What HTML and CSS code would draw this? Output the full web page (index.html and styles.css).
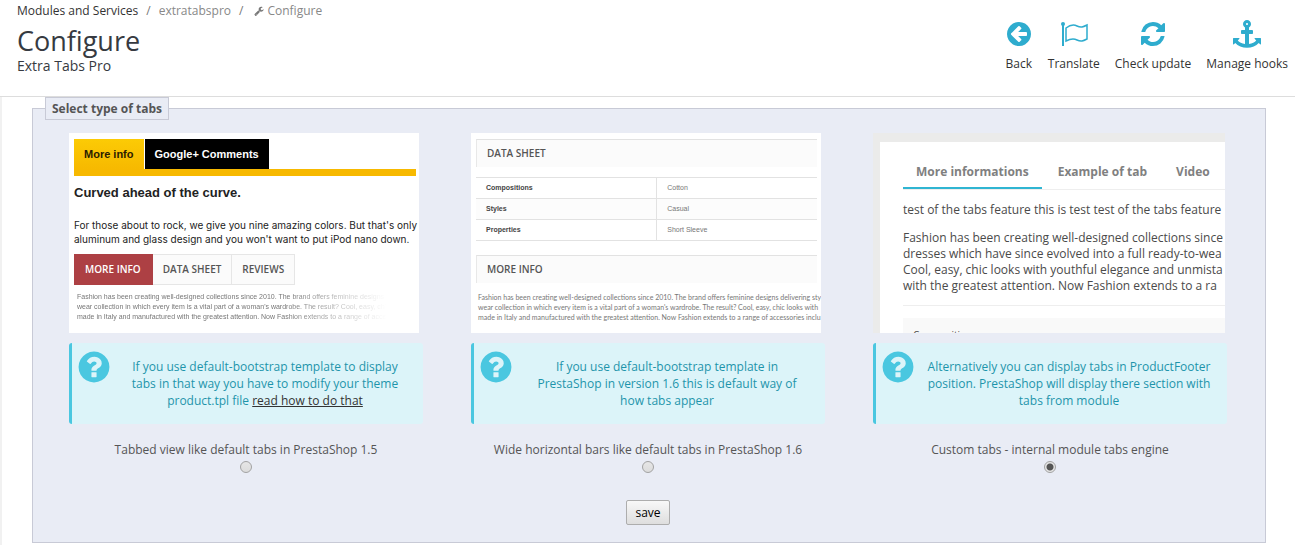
FILE: index.html
```html
<!DOCTYPE html>
<html lang="en">
<head>
<meta charset="utf-8">
<title>Configure - Extra Tabs Pro</title>
<link rel="stylesheet" href="styles.css">
</head>
<body>
<svg class="sprite" aria-hidden="true">
  <symbol id="question" viewBox="0 0 1792 1792"><path d="M1024 1376v-192q0-14-9-23t-23-9h-192q-14 0-23 9t-9 23v192q0 14 9 23t23 9h192q14 0 23-9t9-23zm256-672q0-88-55.500-163t-138.500-116-170-41q-243 0-371 213-15 24 8 42l132 100q7 6 19 6 16 0 25-12 53-68 86-92 34-24 86-24 48 0 85.500 26t37.500 59q0 38-20 61t-68 45q-63 28-115.500 86.500t-52.500 125.500v36q0 14 9 23t23 9h192q14 0 23-9t9-23q0-19 21.500-49.500t54.500-49.500q32-18 49-28.500t46-35 44.500-48 28-60.500 12.500-81zm384 192q0 209-103 385.500t-279.500 279.500-385.500 103-385.500-103-279.500-279.500-103-385.500 103-385.500 279.500-279.500 385.500-103 385.500 103 279.500 279.500 103 385.500z"/></symbol>
</svg>
<header class="page-head">
  <div class="titles">
    <nav class="breadcrumb" aria-label="Breadcrumb">
      <a class="crumb-root" href="#">Modules and Services</a>
      <span class="sep">/</span>
      <a href="#">extratabspro</a>
      <span class="sep">/</span>
      <a class="crumb-current" href="#"><svg class="wrench" viewBox="0 0 1792 1792" aria-hidden="true"><path d="M448 1472q0-26-19-45t-45-19-45 19-19 45 19 45 45 19 45-19 19-45zm644-420l-682 682q-37 37-90 37-52 0-91-37l-106-108q-38-36-38-90 0-53 38-91l681-681q39 98 114.500 173.500t173.500 114.500zm634-435q0 39-23 106-47 134-164.500 217.500t-258.500 83.500q-185 0-316.500-131.500t-131.500-316.500 131.500-316.500 316.500-131.500q58 0 121.500 16.500t107.500 46.500q16 11 16 28t-16 28l-293 169v224l193 107q5-3 79-48.500t135.500-81 70.500-35.500q15 0 23.500 10t8.500 25z"/></svg>Configure</a>
    </nav>
    <h1>Configure</h1>
    <h2>Extra Tabs Pro</h2>
  </div>
  <nav class="toolbar" aria-label="Module actions">
    <a href="#"><svg viewBox="-128 -128 1792 1792" aria-hidden="true"><path d="M1280 832v-128q0-26-19-45t-45-19h-502l189-189q19-19 19-45t-19-45l-91-91q-18-18-45-18t-45 18l-362 362-91 91q-18 18-18 45t18 45l91 91 362 362q18 18 45 18t45-18l91-91q18-18 18-45t-18-45l-189-189h502q26 0 45-19t19-45zm256-64q0 209-103 385.500t-279.500 279.500-385.500 103-385.500-103-279.500-279.500-103-385.500 103-385.500 279.500-279.500 385.500-103 385.500 103 279.500 279.500 103 385.500z"/></svg>Back</a>
    <a href="#"><svg viewBox="0 0 28 28" aria-hidden="true"><circle cx="3" cy="4" r="2"/><path d="M2 4h2v22H2z"/><path class="flag-line" d="M6 8C10 5 13 4 17 6c4 2 6 1 10-1v14c-4 2-6 3-10 1-4-2-7-1-11 1z"/></svg>Translate</a>
    <a href="#"><svg viewBox="0 0 1792 1792" aria-hidden="true"><path d="M1639 1056q0 5-1 7-64 268-268 434.500t-478 166.500q-146 0-282.500-55t-243.500-157l-129 129q-19 19-45 19t-45-19-19-45v-448q0-26 19-45t45-19h448q26 0 45 19t19 45-19 45l-137 137q71 66 161 102t187 36q134 0 250-65t186-179q11-17 53-117 8-23 30-23h192q13 0 22.500 9.500t9.500 22.500zm25-800v448q0 26-19 45t-45 19h-448q-26 0-45-19t-19-45 19-45l138-138q-148-137-349-137-134 0-250 65t-186 179q-11 17-53 117-8 23-30 23h-199q-13 0-22.500-9.500t-9.500-22.500v-7q65-268 270-434.500t480-166.500q146 0 284 55.500t245 156.500l130-129q19-19 45-19t45 19 19 45z"/></svg>Check update</a>
    <a href="#"><svg viewBox="0 0 1792 1792" aria-hidden="true"><path d="M960 256q0-26-19-45t-45-19-45 19-19 45 19 45 45 19 45-19 19-45zm832 928v352q0 22-20 30-8 2-12 2-12 0-23-9l-93-93q-119 143-318.500 226.500t-429.500 83.500-429.500-83.500-318.500-226.500l-93 93q-9 9-23 9-4 0-12-2-20-8-20-30v-352q0-14 9-23t23-9h352q22 0 30 20 8 19-7 35l-100 100q67 91 189.500 153.500t271.500 82.500v-647h-192q-26 0-45-19t-19-45v-128q0-26 19-45t45-19h192v-163q-58-34-93-92.500t-35-128.500q0-106 75-181t181-75 181 75 75 181q0 70-35 128.500t-93 92.500v163h192q26 0 45 19t19 45v128q0 26-19 45t-45 19h-192v647q149-20 271.500-82.500t189.500-153.500l-100-100q-15-16-7-35 8-20 30-20h352q14 0 23 9t9 23z"/></svg>Manage hooks</a>
  </nav>
</header>

<main class="content">
  <form>
    <fieldset class="panel">
      <legend>Select type of tabs</legend>
      <div class="options">
        <section class="option">
          <div class="preview classic">
            <div class="gold-tabs"><span class="gold">More info</span><span class="black">Google+ Comments</span></div>
            <h3>Curved ahead of the curve.</h3>
            <p class="copy">For those about to rock, we give you nine amazing colors. But that's only<br>aluminum and glass design and you won't want to put iPod nano down.</p>
            <div class="red-tabs"><span class="on">MORE INFO</span><span>DATA SHEET</span><span>REVIEWS</span></div>
            <p class="tiny faded">Fashion has been creating well-designed collections since 2010. The brand offers feminine designs<br>wear collection in which every item is a vital part of a woman's wardrobe. The result? Cool, easy, chi<br>made in Italy and manufactured with the greatest attention. Now Fashion extends to a range of acce</p>
          </div>
          <div class="hint"><svg aria-hidden="true"><use href="#question"/></svg><p>If you use default-bootstrap template to display tabs in that way you have to modify your theme product.tpl file <a href="#">read how to do that</a></p></div>
          <label class="choice">Tabbed view like default tabs in PrestaShop 1.5<input type="radio" name="tabtype" value="15"></label>
        </section>

        <section class="option">
          <div class="preview sheets">
            <h3>DATA SHEET</h3>
            <table>
              <tr><th scope="row">Compositions</th><td>Cotton</td></tr>
              <tr><th scope="row">Styles</th><td>Casual</td></tr>
              <tr><th scope="row">Properties</th><td>Short Sleeve</td></tr>
            </table>
            <h3>MORE INFO</h3>
            <p class="tiny">Fashion has been creating well-designed collections since 2010. The brand offers feminine designs delivering sty<br>wear collection in which every item is a vital part of a woman's wardrobe. The result? Cool, easy, chic looks with<br>made in Italy and manufactured with the greatest attention. Now Fashion extends to a range of accessories inclu</p>
          </div>
          <div class="hint"><svg aria-hidden="true"><use href="#question"/></svg><p>If you use default-bootstrap template in PrestaShop in version 1.6 this is default way of how tabs appear</p></div>
          <label class="choice">Wide horizontal bars like default tabs in PrestaShop 1.6<input type="radio" name="tabtype" value="16"></label>
        </section>

        <section class="option">
          <div class="preview custom">
            <div class="sheet">
              <div class="line-tabs"><span class="on">More informations</span><span>Example of tab</span><span>Video</span></div>
              <p>test of the tabs feature this is test test of the tabs feature</p>
              <p>Fashion has been creating well-designed collections since<br>dresses which have since evolved into a full ready-to-wea<br>Cool, easy, chic looks with youthful elegance and unmista<br>with the greatest attention. Now Fashion extends to a ra</p>
              <div class="comp">Compositions</div>
            </div>
          </div>
          <div class="hint"><svg aria-hidden="true"><use href="#question"/></svg><p>Alternatively you can display tabs in ProductFooter position. PrestaShop will display there section with tabs from module</p></div>
          <label class="choice">Custom tabs - internal module tabs engine<input type="radio" name="tabtype" value="custom" checked></label>
        </section>
      </div>
      <div class="actions"><button type="submit">save</button></div>
    </fieldset>
  </form>
</main>
</body>
</html>
```

FILE: styles.css
```css
* { box-sizing: border-box; }

body {
  margin: 0;
  background: #fff;
  color: #555;
  font: 12px/17px "Open Sans", sans-serif;
}

h1, h2, h3, p { margin: 0; font-weight: 400; }

.sprite { display: none; }

/* Page header */
.page-head {
  display: flex;
  justify-content: space-between;
  min-height: 97px;
  padding: 2px 7px 0 17px;
  border-bottom: 1px solid #ddd;
}

.breadcrumb { display: flex; gap: 8px; white-space: nowrap; }
.breadcrumb a { color: #888; text-decoration: none; }
.breadcrumb .crumb-root { color: #333; }
.breadcrumb .sep { color: #777; }
.breadcrumb .crumb-current { display: flex; align-items: center; gap: 3px; margin-left: 3px; }
.wrench { width: 10px; height: 10px; fill: #777; }

h1 { color: #363a41; font-size: 27px; line-height: 36px; margin-top: 4px; }
h2 { color: #363a41; font-size: 14px; line-height: 14px; }

.toolbar { display: flex; gap: 15px; padding-top: 18px; }
.toolbar a {
  display: flex;
  flex-direction: column;
  align-items: center;
  gap: 7px;
  color: #333;
  text-decoration: none;
  white-space: nowrap;
}
.toolbar svg { width: 28px; height: 28px; fill: #2eacce; }
.toolbar .flag-line { fill: none; stroke: #2eacce; stroke-width: 1.5; }

/* Settings panel */
.content { padding: 0 29px 2px 30px; border-left: 2px solid #f1f1f1; }

.panel {
  margin: 0;
  padding: 13px 38px 17px 36px;
  border: 1px solid #c8cad6;
  background: #e9ecf5;
  min-width: 0;
}
.panel legend {
  margin-left: -24px;
  padding: 3px 6px 2px;
  border: 1px solid #c8cad6;
  background: #e9ecf5;
  color: #555;
  font-weight: 700;
  line-height: 16px;
}

.options { display: grid; grid-template-columns: repeat(3, minmax(0, 1fr)); gap: 48px; }

.hint {
  display: flex;
  margin-top: 10px;
  min-height: 81px;
  padding: 6px 16px 14px 4px;
  border-left: 3px solid #4ac7e0;
  border-radius: 3px;
  background: #dcf4f9;
  color: #1e94ab;
}
.hint svg { flex: none; width: 36px; height: 36px; fill: #4ac7e0; }
.hint p { flex: 1; padding: 9px 0 0 11px; text-align: center; }
.hint a { color: #333; }

.choice { display: flex; flex-direction: column; align-items: center; margin-top: 17px; }
.choice input {
  appearance: none;
  width: 12px;
  height: 12px;
  margin: 3px 0 0;
  border: 1px solid #a2a2a2;
  border-radius: 50%;
  background: linear-gradient(#e6e6e6, #dcdcdc);
}
.choice input:checked { background: radial-gradient(circle, #555 0 3px, #e6e6e6 4px); }

.actions { display: flex; justify-content: center; margin-top: 27px; }
.actions button {
  padding: 3px 8px;
  border: 1px solid #adadad;
  border-radius: 2px;
  background: linear-gradient(#f8f8f8, #dedede);
  color: #000;
  font: 12px/17px "Open Sans", sans-serif;
}

/* Layout previews */
.preview { height: 200px; margin-right: 4px; overflow: hidden; background: #fff; white-space: nowrap; }

.tiny { color: #777; font: 7px/10px "Liberation Sans", Arial, sans-serif; }

.classic { padding: 6px 3px 0 5px; color: #222; font-family: "Liberation Sans", Arial, sans-serif; }
.gold-tabs { display: flex; gap: 1px; border-bottom: 7px solid #f7b900; font-size: 11px; font-weight: 700; line-height: 29px; }
.gold-tabs span { padding: 1px 10px 0; }
.gold { background: linear-gradient(#fccb05, #f7b900); color: #2b1d00; }
.black { background: #000; color: #fff; }
.classic h3 { margin-top: 9px; font-size: 13px; font-weight: 700; line-height: 16px; }
.copy { margin-top: 17px; font: 10px/14px Inter, Arial, sans-serif; }
.red-tabs { display: flex; margin-top: 8px; font: 600 10px/29px "Open Sans", sans-serif; color: #555; }
.red-tabs span { padding: 0 10px; border: 1px solid #e6e6e6; border-left: 0; background: #fbfbfb; }
.red-tabs .on { padding: 0 11px; border-color: #ad4044; background: #ad4044; color: #fff; }
.faded {
  margin: 7px 20px 0 3px;
  mask-image: linear-gradient(90deg, #000 65%, transparent 97%);
}

.sheets { padding: 6px 4px 0 5px; }
.sheets h3 {
  padding: 0 10px;
  border-top: 1px solid #e2e2e2;
  border-left: 1px solid #e8e8e8;
  background: #fbfbfb;
  color: #555;
  font-size: 10px;
  font-weight: 600;
  line-height: 27px;
}
.sheets table {
  width: 100%;
  margin: 10px 0 14px;
  border-collapse: collapse;
  font: 7px/10px "Liberation Sans", Arial, sans-serif;
}
.sheets th, .sheets td { height: 21px; padding: 0 10px; border: solid #e2e2e2; border-width: 1px 0; text-align: left; color: #777; }
.sheets th { width: 53%; border-right-width: 1px; color: #444; }
.sheets tr:nth-child(2) { background: #fcfcfc; }
.sheets .tiny { margin: 9px 0 0 2px; font-family: Lato, Arial, sans-serif; }

.custom { margin-right: 2px; padding: 9px 0 0 7px; background: #ebebea; }
.sheet { height: 200px; padding: 15px 0 0 23px; background: #fff; color: #4a4a4a; line-height: 16px; }
.line-tabs { display: flex; color: #808080; font-weight: 700; line-height: 30px; border-bottom: 1px solid #eee; }
.line-tabs span { padding: 0 13px 0 16px; }
.line-tabs .on { padding: 0 13px; border-bottom: 2px solid #2fb5d2; }
.sheet p { margin-top: 12px; }
.sheet p + p { padding-bottom: 11px; border-bottom: 1px solid #eee; }
.comp { margin-top: 12px; padding: 9px 10px; background: #f9f9f9; font-size: 10px; }
```
